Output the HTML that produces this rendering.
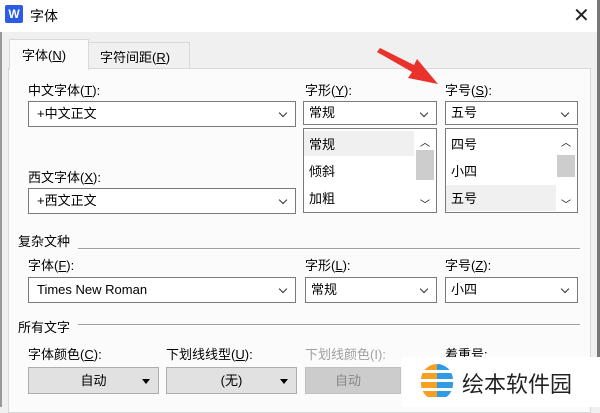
<!DOCTYPE html><html><head><meta charset="utf-8"><style>
*{box-sizing:border-box;margin:0;padding:0}
body{width:600px;height:407px;overflow:hidden;background:#f0f0f0;font-family:"Liberation Sans","Noto Sans CJK SC",sans-serif;font-size:13px;color:#000;position:relative}
.a{position:absolute}
.t{position:absolute;white-space:nowrap;font-size:13px}
.box{position:absolute;border:1px solid #7a7a7a;background:#fff}
.combo{position:absolute;border:1px solid #7a7a7a;background:#fff;padding-left:8px;line-height:24px}
.combo:after{content:"";position:absolute;right:9px;top:8px;width:5px;height:5px;border-right:1px solid #333;border-bottom:1px solid #333;transform:rotate(45deg)}
.btn{position:absolute;border:1px solid #adadad;background:#e1e1e1;text-align:center;line-height:25px}
.btn:after{content:"";position:absolute;right:8px;top:11px;border:4px solid transparent;border-top:5px solid #000}
.hr{position:absolute;height:2px;background:#a0a0a0;border-bottom:1px solid #fff}
u{text-decoration:underline}
</style></head><body>
<div class="a" style="left:0;top:0;width:600px;height:32px;background:#fff"></div>
<div class="a" style="left:5px;top:5px;width:18px;height:18px;background:#2b5ce6;border-radius:2px;color:#fff;font-weight:bold;font-size:12px;text-align:center;line-height:18px">W</div>
<div class="t" style="left:30px;top:6px;font-size:14px">字体</div>
<div class="t" style="left:573px;top:3px;font-size:20px;color:#222">✕</div>
<div class="a" style="left:0;top:32px;width:2px;height:375px;background:#999"></div>
<div class="a" style="left:597px;top:0;width:3px;height:407px;background:#777"></div>
<!-- tabs -->
<div class="a" style="left:88px;top:42px;width:102px;height:27px;border:1px solid #d9d9d9;border-bottom:none;background:#f0f0f0"></div>
<div class="t" style="left:100px;top:47px">字符间距(<u>R</u>)</div>
<div class="a" style="left:8px;top:68px;width:583px;height:345px;border:1px solid #d9d9d9;background:#fbfbfb"></div>
<div class="a" style="left:9px;top:39px;width:80px;height:31px;border:1px solid #d9d9d9;border-bottom:none;background:#fbfbfb"></div>
<div class="t" style="left:22px;top:45px">字体(<u>N</u>)</div>
<!-- row1 -->
<div class="t" style="left:28px;top:80px">中文字体(<u>T</u>):</div>
<div class="combo" style="left:28px;top:101px;width:268px;height:26px">+中文正文</div>
<div class="t" style="left:305px;top:80px">字形(<u>Y</u>):</div>
<div class="combo" style="left:303px;top:101px;width:134px;height:24px;line-height:22px;padding-left:5px">常规</div>
<div class="box" style="left:303px;top:128px;width:134px;height:85px"></div>
<div class="a" style="left:304px;top:131px;width:110px;height:25px;background:#f0f0f0"></div>
<div class="t" style="left:309px;top:134px">常规</div>
<div class="t" style="left:309px;top:161px">倾斜</div>
<div class="t" style="left:309px;top:188px">加粗</div>
<div class="a" style="left:416px;top:150px;width:18px;height:30px;background:#cdcdcd"></div>
<div class="t" style="left:420px;top:134px;font-size:10px">︿</div>
<div class="t" style="left:420px;top:196px;font-size:10px">﹀</div>
<div class="t" style="left:445px;top:80px">字号(<u>S</u>):</div>
<div class="combo" style="left:445px;top:101px;width:133px;height:24px;line-height:22px;padding-left:5px">五号</div>
<div class="box" style="left:445px;top:128px;width:133px;height:85px"></div>
<div class="a" style="left:446px;top:185px;width:110px;height:26px;background:#f0f0f0"></div>
<div class="t" style="left:451px;top:134px">四号</div>
<div class="t" style="left:451px;top:161px">小四</div>
<div class="t" style="left:451px;top:188px">五号</div>
<div class="a" style="left:557px;top:155px;width:18px;height:22px;background:#cdcdcd"></div>
<div class="t" style="left:561px;top:134px;font-size:10px">︿</div>
<div class="t" style="left:561px;top:196px;font-size:10px">﹀</div>
<div class="t" style="left:28px;top:167px">西文字体(<u>X</u>):</div>
<div class="combo" style="left:28px;top:188px;width:268px;height:26px">+西文正文</div>
<div class="t" style="left:18px;top:231px">复杂文种</div>
<div class="hr" style="left:78px;top:248px;width:502px"></div>
<div class="t" style="left:28px;top:255px">字体(<u>F</u>):</div>
<div class="combo" style="left:28px;top:277px;width:268px;height:26px">Times New Roman</div>
<div class="t" style="left:305px;top:255px">字形(<u>L</u>):</div>
<div class="combo" style="left:305px;top:277px;width:132px;height:26px;padding-left:5px">常规</div>
<div class="t" style="left:445px;top:255px">字号(<u>Z</u>):</div>
<div class="combo" style="left:445px;top:277px;width:133px;height:26px;padding-left:5px">小四</div>
<div class="t" style="left:18px;top:317px">所有文字</div>
<div class="hr" style="left:78px;top:324px;width:502px"></div>
<div class="t" style="left:28px;top:344px">字体颜色(<u>C</u>):</div>
<div class="btn" style="left:28px;top:367px;width:131px;height:27px">自动</div>
<div class="t" style="left:166px;top:344px">下划线线型(<u>U</u>):</div>
<div class="btn" style="left:166px;top:367px;width:131px;height:27px">(无)</div>
<div class="t" style="left:305px;top:344px;color:#a0a0a0">下划线颜色(I):</div>
<div class="a" style="left:305px;top:367px;width:96px;height:27px;background:#cccccc;border:1px solid #bfbfbf;text-align:center;line-height:25px;color:#888;padding-right:10px">自动</div>
<div class="t" style="left:445px;top:344px">着重号:</div>
<!-- logo -->
<div class="a" style="left:402px;top:357px;width:198px;height:50px;background:#fff"></div>
<div class="a" style="left:421px;top:364px;width:16px;height:36px;border-radius:18px 0 0 18px;background:repeating-linear-gradient(#f5a020 0 6px,#fff 6px 9px)"></div>
<div class="a" style="left:437px;top:364px;width:16px;height:36px;border-radius:0 18px 18px 0;background:repeating-linear-gradient(#2f9be8 0 6px,#fff 6px 9px)"></div>
<div class="t" style="left:462px;top:367px;font-size:22px;color:#222">绘本软件园</div>
<!-- arrow -->
<svg class="a" style="left:370px;top:40px" width="80" height="50"><path d="M7 12 L10 8 L44 25 L47 19 L68 44 L38 38 L42 32 Z" fill="#e8322b"/></svg>
</body></html>
